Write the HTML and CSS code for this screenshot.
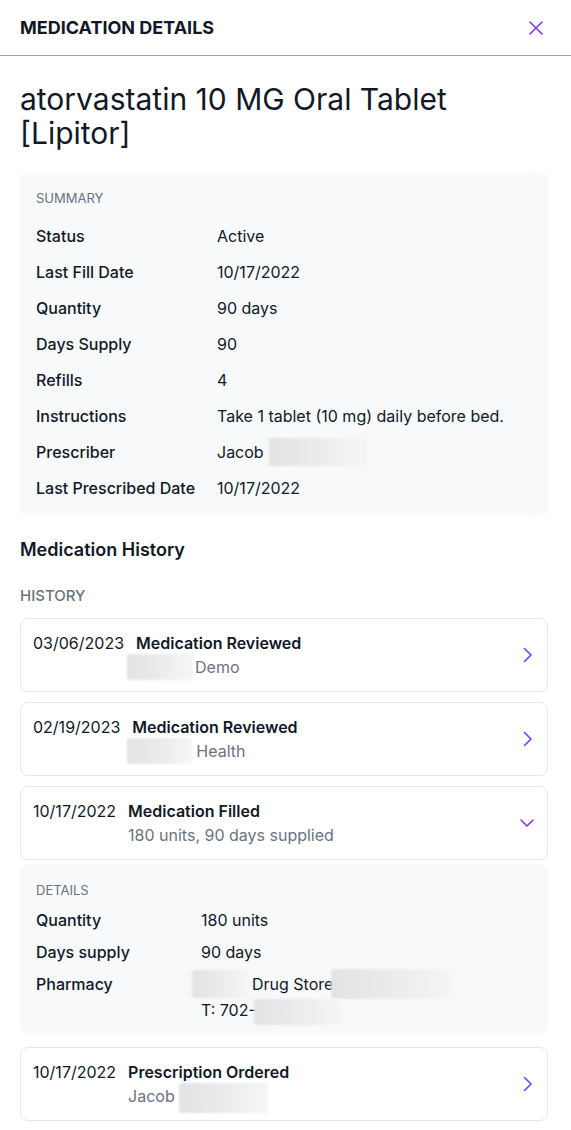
FILE: index.html
```html
<!DOCTYPE html>
<html lang="en">
<head>
    <meta charset="UTF-8">
    <meta name="viewport" content="width=device-width, initial-scale=1.0">
    <title>Medication Details</title>
    <link rel="stylesheet" href="styles.css">
</head>
<body>
    <div class="panel">
        <!-- Header -->
        <header class="panel-header">
            <h1>MEDICATION DETAILS</h1>
            <button class="close" aria-label="Close">
                <svg width="14" height="14" viewBox="0 0 14 14"><path d="M1 1l12 12M13 1L1 13" stroke="currentColor" stroke-width="1.6" stroke-linecap="round"/></svg>
            </button>
        </header>

        <main class="panel-body">
            <h2 class="med-name">atorvastatin 10 MG Oral Tablet [Lipitor]</h2>

            <!-- Summary -->
            <section class="info-box summary">
                <div class="box-label">SUMMARY</div>
                <dl class="info-grid">
                    <dt>Status</dt><dd>Active</dd>
                    <dt>Last Fill Date</dt><dd>10/17/2022</dd>
                    <dt>Quantity</dt><dd>90 days</dd>
                    <dt>Days Supply</dt><dd>90</dd>
                    <dt>Refills</dt><dd>4</dd>
                    <dt>Instructions</dt><dd>Take 1 tablet (10 mg) daily before bed.</dd>
                    <dt>Prescriber</dt><dd>Jacob <span class="redact redact-name"></span></dd>
                    <dt>Last Prescribed Date</dt><dd>10/17/2022</dd>
                </dl>
            </section>

            <!-- History -->
            <h3 class="section-title">Medication History</h3>
            <div class="history-label">HISTORY</div>

            <div class="history">
                <div class="event">
                    <div class="event-date">03/06/2023</div>
                    <div class="event-info">
                        <div class="event-title">Medication Reviewed</div>
                        <div class="event-sub"><span class="redact redact-org1"></span>Demo</div>
                    </div>
                    <svg class="chevron" width="16" height="16" viewBox="0 0 16 16"><path d="M5.5 1.5l6.5 6.5-6.5 6.5" fill="none" stroke="currentColor" stroke-width="1.6" stroke-linecap="round" stroke-linejoin="round"/></svg>
                </div>

                <div class="event">
                    <div class="event-date">02/19/2023</div>
                    <div class="event-info">
                        <div class="event-title">Medication Reviewed</div>
                        <div class="event-sub"><span class="redact redact-org2"></span>Health</div>
                    </div>
                    <svg class="chevron" width="16" height="16" viewBox="0 0 16 16"><path d="M5.5 1.5l6.5 6.5-6.5 6.5" fill="none" stroke="currentColor" stroke-width="1.6" stroke-linecap="round" stroke-linejoin="round"/></svg>
                </div>

                <div class="event-group">
                    <div class="event">
                        <div class="event-date">10/17/2022</div>
                        <div class="event-info">
                            <div class="event-title">Medication Filled</div>
                            <div class="event-sub">180 units, 90 days supplied</div>
                        </div>
                        <svg class="chevron" width="16" height="16" viewBox="0 0 16 16"><path d="M2 5l6 6 6-6" fill="none" stroke="currentColor" stroke-width="1.6" stroke-linecap="round" stroke-linejoin="round"/></svg>
                    </div>

                    <section class="info-box details">
                        <div class="box-label">DETAILS</div>
                        <dl class="info-grid">
                            <dt>Quantity</dt><dd>180 units</dd>
                            <dt>Days supply</dt><dd>90 days</dd>
                            <dt>Pharmacy</dt>
                            <dd>
                                <span class="redact redact-store"></span>Drug Store<span class="redact redact-addr"></span><br>
                                T: 702-<span class="redact redact-phone"></span>
                            </dd>
                        </dl>
                    </section>
                </div>

                <div class="event">
                    <div class="event-date">10/17/2022</div>
                    <div class="event-info">
                        <div class="event-title">Prescription Ordered</div>
                        <div class="event-sub">Jacob <span class="redact redact-doc"></span></div>
                    </div>
                    <svg class="chevron" width="16" height="16" viewBox="0 0 16 16"><path d="M5.5 1.5l6.5 6.5-6.5 6.5" fill="none" stroke="currentColor" stroke-width="1.6" stroke-linecap="round" stroke-linejoin="round"/></svg>
                </div>
            </div>
        </main>
    </div>
</body>
</html>
```

FILE: styles.css
```css
body {
    margin: 0;
    font-family: Inter, "Noto Sans", sans-serif;
    color: #111827;
    background: white;
}

/* Header */
.panel-header {
    height: 55px;
    display: flex;
    align-items: center;
    justify-content: space-between;
    padding: 0 28px 0 20px;
    border-bottom: 1px solid #a3a3a8;
}

.panel-header h1 {
    margin: 0;
    font-size: 18px;
    font-weight: 700;
}

.close {
    border: none;
    background: none;
    padding: 0;
    display: flex;
    color: #7c3aed;
    cursor: pointer;
}

/* Body */
.panel-body {
    padding: 26px 23px 20px 20px;
}

.med-name {
    margin: 0 0 22px;
    font-size: 30px;
    line-height: 34px;
    font-weight: 400;
}

/* Grey info boxes */
.info-box {
    background: #f8f9fb;
    border-radius: 8px;
    padding: 16px;
}

.box-label {
    font-size: 13px;
    line-height: 20px;
    color: #6b7280;
    margin-bottom: 16px;
}

.info-grid {
    display: grid;
    grid-template-columns: 181px 1fr;
    row-gap: 12px;
    margin: 0;
    font-size: 16px;
    line-height: 24px;
}

.info-grid dt {
    font-weight: 500;
}

.info-grid dd {
    margin: 0;
}

.event-group {
    margin-bottom: 2px;
}

.details {
    margin-top: 4px;
    padding-bottom: 13px;
}

.details .box-label {
    margin-bottom: 8px;
}

.details .info-grid {
    grid-template-columns: 165px 1fr;
    row-gap: 8px;
}

/* Blurred out bits */
.redact {
    display: inline-block;
    vertical-align: top;
    height: 28px;
    margin: -2px 0;
    background: linear-gradient(90deg, #e3e3e6, #ececee 55%, #f6f6f7);
    border-radius: 2px;
    filter: blur(1px);
}

.redact-name { width: 98px; margin-left: 1px; }
.redact-org1 { width: 66px; height: 26px; margin: -1px 2px -1px -9px; }
.redact-org2 { width: 65px; height: 26px; margin: -1px 4px -1px -5px; }
.redact-store { width: 57px; margin-left: -9px; margin-right: 3px; }
.redact-addr { width: 124px; height: 30px; margin: -3px 0 -1px -2px; }
.redact-phone { width: 89px; height: 26px; margin: 1px 0 -3px -2px; }
.redact-doc { width: 89px; height: 30px; margin: -1px 0 -5px; }

/* History */
.section-title {
    margin: 22px 0 0;
    font-size: 18px;
    line-height: 24px;
    font-weight: 600;
}

.history-label {
    margin: 24px 0 12px;
    font-size: 15px;
    line-height: 20px;
    font-weight: 500;
    color: #6b7280;
}

.history {
    display: flex;
    flex-direction: column;
    gap: 10px;
}

.event {
    display: flex;
    align-items: center;
    border: 1px solid #e5e7eb;
    border-radius: 8px;
    padding: 12px;
    font-size: 16px;
    line-height: 24px;
}

.event-date {
    align-self: flex-start;
    margin-right: 12px;
}

.event-info {
    flex: 1;
}

.event-title {
    font-weight: 600;
}

.event-sub {
    color: #6b7280;
}

.chevron {
    color: #7c3aed;
}
```
